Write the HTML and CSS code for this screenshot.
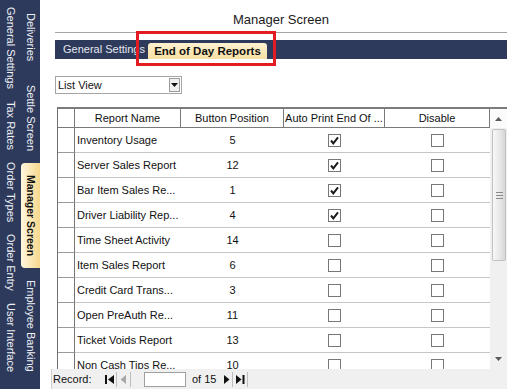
FILE: index.html
```html
<!DOCTYPE html>
<html>
<head>
<meta charset="utf-8">
<link rel="stylesheet" href="styles.css">
</head>
<body>
<div class="app">
  <nav class="sidebar">
    <div class="tabcol tabcol-outer">
      <div class="vtab">General Settings</div>
      <div class="vtab">Tax Rates</div>
      <div class="vtab">Order Types</div>
      <div class="vtab">Order Entry</div>
      <div class="vtab">User Interface</div>
    </div>
    <div class="tabcol tabcol-inner">
      <div class="vtab">Deliveries</div>
      <div class="vtab">Settle Screen</div>
      <div class="vtab active">Manager Screen</div>
      <div class="vtab">Employee Banking</div>
    </div>
  </nav>
  <main class="main">
    <h1 class="title">Manager Screen</h1>
    <div class="tabbar">
      <div class="htab htab-plain">General Settings</div>
      <div class="htab htab-selected">End of Day Reports</div>
      <div class="highlight"></div>
    </div>
    <div class="select">
      <span>List View</span>
      <span class="select-btn"><svg width="7" height="4" viewBox="0 0 7 4"><polygon points="0,0 7,0 3.5,4" fill="#111"/></svg></span>
    </div>
    <div class="grid">
      <div class="grid-table">
        <div class="row head">
          <div class="cell sel"></div>
          <div class="cell">Report Name</div>
          <div class="cell">Button Position</div>
          <div class="cell">Auto Print End Of ...</div>
          <div class="cell">Disable</div>
        </div>
        <div class="row">
          <div class="cell sel"></div><div class="cell name">Inventory Usage</div><div class="cell">5</div>
          <div class="cell"><span class="cb"><svg width="11" height="11" viewBox="0 0 11 11"><polyline points="2,5.5 4.3,8.3 9,2.3" fill="none" stroke="#1a1a1a" stroke-width="2"/></svg></span></div>
          <div class="cell"><span class="cb"></span></div>
        </div>
        <div class="row">
          <div class="cell sel"></div><div class="cell name">Server Sales Report</div><div class="cell">12</div>
          <div class="cell"><span class="cb"><svg width="11" height="11" viewBox="0 0 11 11"><polyline points="2,5.5 4.3,8.3 9,2.3" fill="none" stroke="#1a1a1a" stroke-width="2"/></svg></span></div>
          <div class="cell"><span class="cb"></span></div>
        </div>
        <div class="row">
          <div class="cell sel"></div><div class="cell name">Bar Item Sales Re...</div><div class="cell">1</div>
          <div class="cell"><span class="cb"><svg width="11" height="11" viewBox="0 0 11 11"><polyline points="2,5.5 4.3,8.3 9,2.3" fill="none" stroke="#1a1a1a" stroke-width="2"/></svg></span></div>
          <div class="cell"><span class="cb"></span></div>
        </div>
        <div class="row">
          <div class="cell sel"></div><div class="cell name">Driver Liability Rep...</div><div class="cell">4</div>
          <div class="cell"><span class="cb"><svg width="11" height="11" viewBox="0 0 11 11"><polyline points="2,5.5 4.3,8.3 9,2.3" fill="none" stroke="#1a1a1a" stroke-width="2"/></svg></span></div>
          <div class="cell"><span class="cb"></span></div>
        </div>
        <div class="row">
          <div class="cell sel"></div><div class="cell name">Time Sheet Activity</div><div class="cell">14</div>
          <div class="cell"><span class="cb"></span></div><div class="cell"><span class="cb"></span></div>
        </div>
        <div class="row">
          <div class="cell sel"></div><div class="cell name">Item Sales Report</div><div class="cell">6</div>
          <div class="cell"><span class="cb"></span></div><div class="cell"><span class="cb"></span></div>
        </div>
        <div class="row">
          <div class="cell sel"></div><div class="cell name">Credit Card Trans...</div><div class="cell">3</div>
          <div class="cell"><span class="cb"></span></div><div class="cell"><span class="cb"></span></div>
        </div>
        <div class="row">
          <div class="cell sel"></div><div class="cell name">Open PreAuth Re...</div><div class="cell">11</div>
          <div class="cell"><span class="cb"></span></div><div class="cell"><span class="cb"></span></div>
        </div>
        <div class="row">
          <div class="cell sel"></div><div class="cell name">Ticket Voids Report</div><div class="cell">13</div>
          <div class="cell"><span class="cb"></span></div><div class="cell"><span class="cb"></span></div>
        </div>
        <div class="row">
          <div class="cell sel"></div><div class="cell name">Non Cash Tips Re...</div><div class="cell">10</div>
          <div class="cell"><span class="cb"></span></div><div class="cell"><span class="cb"></span></div>
        </div>
      </div>
      <div class="vscroll">
        <div class="sb-btn"><svg width="7" height="4" viewBox="0 0 7 4"><polygon points="0,4 7,4 3.5,0" fill="#5a5a5a"/></svg></div>
        <div class="sb-thumb">
          <svg width="7" height="7" viewBox="0 0 7 7"><path d="M0 0.5H7M0 3.5H7M0 6.5H7" stroke="#8a8a8a" stroke-width="1"/></svg>
        </div>
        <div class="sb-track"></div>
        <div class="sb-btn sb-down"><svg width="7" height="4" viewBox="0 0 7 4"><polygon points="0,0 7,0 3.5,4" fill="#5a5a5a"/></svg></div>
      </div>
    </div>
    <div class="recordbar">
      <span class="rec-label">Record:</span>
      <span class="nav-btn nav-first"><svg width="13" height="13" viewBox="0 0 13 13"><rect x="2" y="2" width="2" height="9" fill="#111"/><polygon points="11,2 11,11 5,6.5" fill="#111"/></svg></span>
      <span class="nav-btn"><svg width="13" height="13" viewBox="0 0 13 13"><polygon points="9,2 9,11 3.5,6.5" fill="#a8a8a8"/></svg></span>
      <span class="rec-input"></span>
      <span class="rec-of">of 15</span>
      <span class="nav-btn nav-next"><svg width="11" height="13" viewBox="0 0 11 13"><polygon points="3,2 3,11 8.5,6.5" fill="#111"/></svg></span>
      <span class="nav-btn"><svg width="14" height="13" viewBox="0 0 14 13"><polygon points="3,2 3,11 8.5,6.5" fill="#111"/><rect x="9.5" y="2" width="2" height="9" fill="#111"/></svg></span>
    </div>
  </main>
</div>
</body>
</html>
```

FILE: styles.css
```css
* { box-sizing: border-box; }

html, body {
  margin: 0;
  padding: 0;
  background: #ffffff;
  font-family: "Liberation Sans", Arial, sans-serif;
  color: #111;
}

.app {
  display: flex;
  width: 509px;
  height: 389px;
  overflow: hidden;
}

/* ---------- vertical tab sidebar ---------- */
.sidebar {
  width: 40px;
  flex: none;
  height: 389px;
  background: #2d3a5c;
  display: flex;
  overflow: hidden;
}

.tabcol {
  display: flex;
  flex-direction: column;
  padding-top: 1px;
}

.tabcol-outer { width: 21px; }
.tabcol-inner { width: 19px; }

.vtab {
  writing-mode: vertical-rl;
  font-size: 11px;
  color: #eef0f5;
  white-space: nowrap;
  text-align: center;
}

.tabcol-outer .vtab {
  padding: 6px 0;
  line-height: 21px;
}

.tabcol-inner .vtab {
  padding: 12px 0;
  line-height: 19px;
}

.tabcol-inner .vtab.active {
  background: linear-gradient(to right, #fff7de, #f6d88e);
  color: #111;
  font-weight: bold;
  font-size: 10.5px;
  border-radius: 4px 0 0 4px;
}

/* ---------- main area ---------- */
.main {
  flex: 1;
  min-width: 0;
  padding: 0 2px 0 15px;
  display: flex;
  flex-direction: column;
}

.title {
  margin: 0;
  height: 33px;
  padding-top: 12px;
  font-size: 13px;
  font-weight: normal;
  line-height: 16px;
  text-align: center;
  color: #1a1a1a;
  border-bottom: 1px solid #a3a3a3;
}

.tabbar {
  position: relative;
  margin-top: 7px;
  height: 19px;
  background: #2d3a5c;
  display: flex;
  align-items: flex-end;
}

.htab {
  font-size: 11px;
  white-space: nowrap;
}

.htab-plain {
  align-self: stretch;
  width: 93px;
  padding-left: 8px;
  line-height: 19px;
  color: #e4e7ee;
  overflow: hidden;
}

.htab-selected {
  width: 119px;
  height: 16px;
  line-height: 16px;
  font-size: 11.5px;
  font-weight: bold;
  text-align: center;
  color: #111;
  background: linear-gradient(#fdf1d0, #f8e0a4);
  border-radius: 3px 3px 0 0;
}

.highlight {
  position: absolute;
  left: 81px;
  top: -9px;
  width: 140px;
  height: 35px;
  border: 3px solid #e31b23;
}

.select {
  margin-top: 17px;
  width: 127px;
  height: 18px;
  border: 1px solid #a5a5a5;
  padding-left: 2px;
  display: flex;
  align-items: center;
  justify-content: space-between;
  font-size: 11px;
}

.select-btn {
  width: 11px;
  height: 14px;
  margin-right: 1px;
  border: 1px solid #9c9c9c;
  background: #f0f0f0;
  display: flex;
  align-items: center;
  justify-content: center;
}

/* ---------- data grid ---------- */
.grid {
  margin-top: 13px;
  margin-left: 2px;
  height: 262px;
  border-top: 2px solid #7c7c7c;
  border-left: 1px solid #6f6f6f;
  display: flex;
  overflow: hidden;
}

.grid-table {
  width: 432px;
  flex: none;
}

.row {
  display: grid;
  grid-template-columns: 17px 106px 103px 101px 105px;
  height: 25px;
  font-size: 11px;
}

.row.head { height: 19px; }

.cell {
  display: flex;
  align-items: center;
  justify-content: center;
  white-space: nowrap;
  overflow: hidden;
  border-bottom: 1px solid #c6c6c6;
}

.cell.name {
  justify-content: flex-start;
  padding-left: 2px;
}

.cell.sel {
  border-right: 1px solid #777;
  border-bottom-color: #9a9a9a;
}

.head .cell {
  border-right: 1px solid #7a7a7a;
  border-bottom: 1px solid #7a7a7a;
}

.cb {
  width: 13px;
  height: 13px;
  border: 1px solid #777;
  background: #fff;
  display: flex;
  align-items: center;
  justify-content: center;
}

/* ---------- scrollbar ---------- */
.vscroll {
  flex: 1;
  display: flex;
  flex-direction: column;
  background: #f0f0f0;
}

.sb-btn {
  height: 19px;
  flex: none;
  display: flex;
  align-items: center;
  justify-content: center;
  background: #fbfbfb;
}

.sb-down {
  height: 14px;
  background: #f0f0f0;
  margin-bottom: 3px;
}

.sb-thumb {
  height: 132px;
  flex: none;
  margin: 1px 1px 0 2px;
  border: 1px solid #c2c2c2;
  border-radius: 2px;
  background: linear-gradient(to right, #f7f7f7, #e6e6e6 60%, #d6d6d6);
  display: flex;
  align-items: center;
  justify-content: center;
}

.sb-track { flex: 1; }

/* ---------- record navigation ---------- */
.recordbar {
  margin-left: -4px;
  height: 20px;
  background: #f0f0f0;
  border-left: 1px solid #cfcfcf;
  display: flex;
  align-items: center;
  font-size: 11px;
}

.rec-label {
  padding-left: 1px;
  width: 51px;
}

.nav-btn {
  height: 15px;
  display: flex;
  align-items: center;
  justify-content: center;
  border-right: 1px solid #bdbdbd;
}

.nav-first { margin-left: 0; }

.rec-input {
  width: 42px;
  height: 15px;
  margin-left: 13px;
  background: #fff;
  border: 1px solid #a0a0a0;
}

.rec-of {
  margin-left: 6px;
  width: 29px;
}

.nav-next { margin-left: 0; }
```
